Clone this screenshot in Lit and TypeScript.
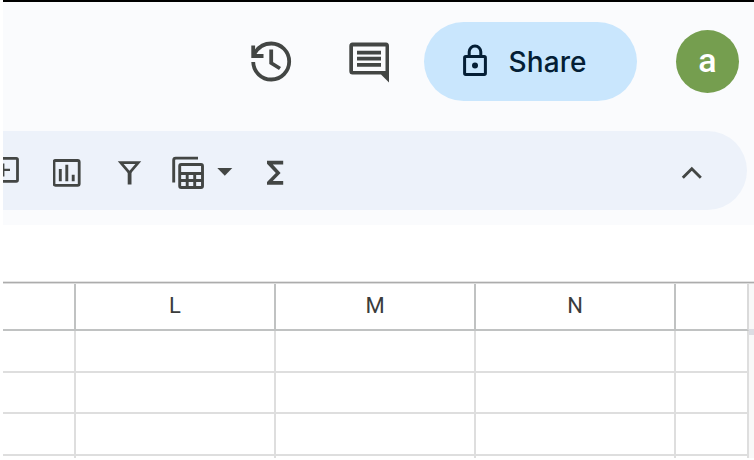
import { LitElement, html, css, svg } from "lit";
import { customElement } from "lit/decorators.js";

const line = (d: string, w: number) =>
  svg`<path d=${d} fill="none" stroke="currentColor" stroke-width=${w} />`;

@customElement("app-root")
export class AppRoot extends LitElement {
  static styles = css`
    :host { display: block; height: 460px; overflow: hidden; background: #fff; color: #434644; }
    * { box-sizing: border-box; }
    .app { margin-left: 3px; height: 458px; overflow: hidden; display: flex; flex-direction: column; }
    .head { flex: none; height: 225px; border-top: 2px solid #000; background: #fafbfd; padding-top: 20px; }
    .actions { display: flex; align-items: center; justify-content: flex-end; height: 79px; padding-right: 15px; }
    svg { display: block; flex: none; }
    .history { margin-right: 57px; }
    .comment { margin-right: 32.5px; }
    .share { display: flex; align-items: center; width: 213px; height: 79px; border: 0; padding: 0 0 0 38.5px; border-radius: 40px;
      background: #c9e6fd; color: #041e35; font: 500 28px/36px Inter, "Liberation Sans", sans-serif; letter-spacing: 0.1px; margin-right: 39.5px; }
    .share svg { margin-top: -3px; }
    .share span { margin-left: 20.5px; }
    .avatar { width: 63px; height: 63px; border-radius: 50%; background: #759e4f; color: #fff; text-align: center;
      font: 500 34px/60px Roboto, sans-serif; }
    .tools { display: flex; align-items: center; width: 744px; height: 79px; margin-top: 30px; border-radius: 0 40px 40px 0; background: #edf2fa; }
    .chart { margin-left: 31.5px; }
    .funnel { margin-left: 36.5px; }
    .views { margin-left: 28px; }
    .caret { margin-left: 12px; margin-top: 2px; }
    .sigma { margin-left: 33px; }
    .up { margin-left: auto; margin-right: 44px; }
    .rule { flex: none; height: 3px; margin-top: 56px; background: linear-gradient(#e4e4e4 1px, #acacac 1px 2px, #dcdcdc 2px); }
    .sheet { display: flex; }
    .grid { display: grid; grid-template-columns: 73px 200px 200px 200px 73px; grid-template-rows: 47px 42px 41px 42px 2px; }
    .cell { border-right: 2px solid #dedede; border-bottom: 2px solid #dedede; }
    .cell.last { border-bottom: 0; }
    .cell.th { border-color: #c0c2c2; text-align: center; font: 400 22px/44px Roboto, sans-serif; color: #3a3c3c; }
    .cell.th.edge { border-right-color: #dadada; }
    .rail { width: 5px; background: #f8f8f8; padding-top: 45px; }
    .bar { height: 6px; background: #dcdde3; }
  `;

  private cells() {
    const heads = ["", "L", "M", "N", ""];
    return [
      ...heads.map((h, i) => html`<div class="cell th ${i === 4 ? "edge" : ""}">${h}</div>`),
      ...Array.from({ length: 20 }, (_, i) => html`<div class="cell ${i > 14 ? "last" : ""}"></div>`),
    ];
  }

  render() {
    return html`
      <div class="app">
        <div class="head">
          <div class="actions">
            <svg class="history" width="42" height="42" viewBox="250 40.5 42 42">
              ${line("M253.2 61.5A18 18 0 1 0 271.3 43C264 43 258 47 254.5 53", 3.8)}
              ${line("M253.2 45V55.5H263.5", 3.8)}
              ${line("M271.2 49V62.5L280 68", 3.8)}
            </svg>
            <svg class="comment" width="42" height="42" viewBox="349 40.5 42 42">
              <path fill="currentColor" fill-rule="evenodd" d="M352.5 42H386Q389 42 389 45.5V82L381 74H352.5Q349.3 74 349.3 70.5V45.5Q349.3 42 352.5 42ZM353 46V70.5H385.5V46Z" />
              ${line("M357 52.2H381M357 58.2H381M357 64.3H381", 3.7)}
            </svg>
            <button class="share">
              <svg width="26" height="34" viewBox="462 42 26 34">
                <rect x="464.6" y="55.6" width="20.8" height="17.8" rx="1.2" fill="none" stroke="currentColor" stroke-width="3" />
                ${line("M469.2 56V50.8A5.8 5.8 0 0 1 480.8 50.8V56", 3)}
                <circle cx="475" cy="64.6" r="3" fill="currentColor" />
              </svg>
              <span>Share</span>
            </button>
            <div class="avatar">a</div>
          </div>
          <div class="tools">
            <svg width="18" height="36" viewBox="3 152.5 18 36">
              ${line("M3 157.8H16.3Q17.5 157.8 17.5 159V179.6Q17.5 180.8 16.3 180.8H3", 2.8)}
              ${line("M3.2 163V176M3 169.4H10", 2.4)}
            </svg>
            <svg class="chart" width="28" height="36" viewBox="52.5 152.5 28 36">
              <rect x="53.5" y="160" width="25.2" height="24.8" rx="1.5" fill="none" stroke="currentColor" stroke-width="2.8" />
              ${line("M59.8 168.5V180.7M66.3 164.3V180.7M72.7 174.3V180.7", 2.9)}
            </svg>
            <svg class="funnel" width="26" height="36" viewBox="117 152.5 26 36">
              ${line("M120.7 162.1H138.3L129.5 172.4Z", 2.7)}
              ${line("M129.6 171V184", 3.8)}
            </svg>
            <svg class="views" width="34" height="36" viewBox="171 152.5 34 36">
              ${line("M173.7 182V159.5Q173.7 157.6 175.7 157.6H198", 2.9)}
              <rect x="179.7" y="164" width="22.8" height="23" rx="1.5" fill="none" stroke="currentColor" stroke-width="2.9" />
              ${line("M180 173H202.5M180 180H202.5M187.2 173V187M194.7 173V187", 2.9)}
            </svg>
            <svg class="caret" width="16" height="8" viewBox="0 0 16 8"><path fill="currentColor" d="M.3 0H15.3L7.8 7.8Z" /></svg>
            <svg class="sigma" width="18" height="36" viewBox="266 152.5 18 36">
              <path fill="currentColor" d="M267 160.2H283.2V163.9H272.8L280.6 172.4L272.8 180.6H283.2V184.3H267V181.4L275.8 172.4L267 163.3Z" />
            </svg>
            <svg class="up" width="22" height="36" viewBox="681 152.5 22 36">${line("M682.8 177.2L691.8 168.2L700.8 177.2", 2.9)}</svg>
          </div>
        </div>
        <div class="rule"></div>
        <div class="sheet">
          <div class="grid">${this.cells()}</div>
          <div class="rail"><div class="bar"></div></div>
        </div>
      </div>
    `;
  }
}
